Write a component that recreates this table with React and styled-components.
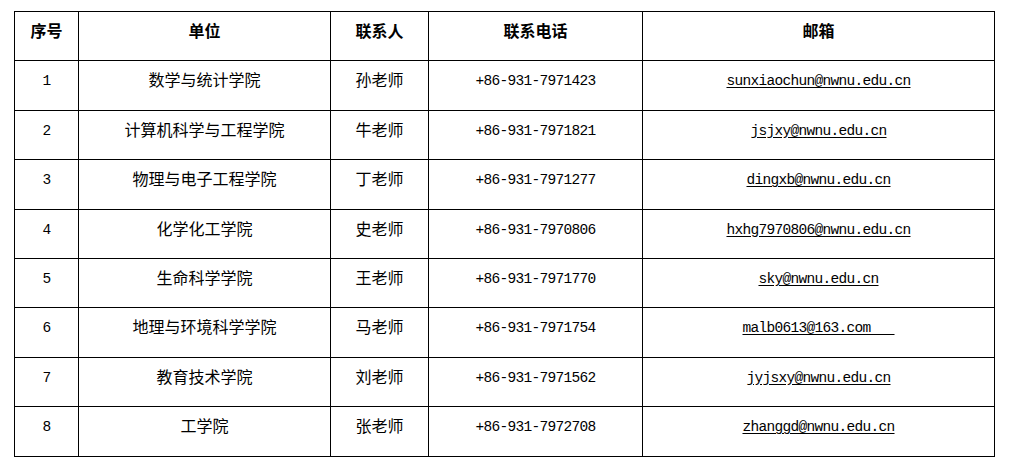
import React from 'react';
import styled, { createGlobalStyle } from 'styled-components';

const GlobalStyle = createGlobalStyle`
  html, body {
    margin: 0;
    background: #fff;
  }
  body {
    font-family: "Noto Sans CJK SC", "Liberation Sans", sans-serif;
    color: #000;
  }
`;

const contacts = [
  { id: 1, unit: '数学与统计学院', person: '孙老师', phone: '+86-931-7971423', email: 'sunxiaochun@nwnu.edu.cn' },
  { id: 2, unit: '计算机科学与工程学院', person: '牛老师', phone: '+86-931-7971821', email: 'jsjxy@nwnu.edu.cn' },
  { id: 3, unit: '物理与电子工程学院', person: '丁老师', phone: '+86-931-7971277', email: 'dingxb@nwnu.edu.cn' },
  { id: 4, unit: '化学化工学院', person: '史老师', phone: '+86-931-7970806', email: 'hxhg7970806@nwnu.edu.cn' },
  { id: 5, unit: '生命科学学院', person: '王老师', phone: '+86-931-7971770', email: 'sky@nwnu.edu.cn' },
  { id: 6, unit: '地理与环境科学学院', person: '马老师', phone: '+86-931-7971754', email: 'malb0613@163.com\u00a0\u00a0\u00a0' },
  { id: 7, unit: '教育技术学院', person: '刘老师', phone: '+86-931-7971562', email: 'jyjsxy@nwnu.edu.cn' },
  { id: 8, unit: '工学院', person: '张老师', phone: '+86-931-7972708', email: 'zhanggd@nwnu.edu.cn' },
];

const columns = [
  { key: 'id', title: '序号', width: 64 },
  { key: 'unit', title: '单位', width: 252 },
  { key: 'person', title: '联系人', width: 98 },
  { key: 'phone', title: '联系电话', width: 214 },
  { key: 'email', title: '邮箱', width: 352 },
];

const App = () => (
  <>
    <GlobalStyle />
    <Page>
      <Table>
        <colgroup>
          {columns.map(col => (
            <col key={col.key} style={{ width: col.width }} />
          ))}
        </colgroup>
        <thead>
          <Row>
            {columns.map(col => (
              <HeadCell key={col.key}>{col.title}</HeadCell>
            ))}
          </Row>
        </thead>
        <tbody>
          {contacts.map(item => (
            <Row key={item.id}>
              <Cell><Latin>{item.id}</Latin></Cell>
              <Cell>{item.unit}</Cell>
              <Cell>{item.person}</Cell>
              <Cell><Latin>{item.phone}</Latin></Cell>
              <Cell><Mail href={`mailto:${item.email.trim()}`}>{item.email}</Mail></Cell>
            </Row>
          ))}
        </tbody>
      </Table>
    </Page>
  </>
);

const Page = styled.div`
  padding: 11px 16px 14px 14px;
`;

const Table = styled.table`
  width: 981px;
  border-collapse: collapse;
  table-layout: fixed;
`;

const Row = styled.tr`
  height: 49.4px;
`;

const HeadCell = styled.th`
  border: 1px solid #000;
  padding: 8px 4px 0;
  vertical-align: top;
  text-align: center;
  font-size: 16px;
  line-height: 20px;
  font-weight: 700;
`;

const Cell = styled.td`
  border: 1px solid #000;
  padding: 8px 4px 0;
  vertical-align: top;
  text-align: center;
  font-size: 16px;
  line-height: 20px;
  font-weight: 400;
`;

const Latin = styled.span`
  font-family: "Liberation Mono", monospace;
  font-size: 14.5px;
  letter-spacing: -0.7px;
  vertical-align: 1px;
`;

const Mail = styled(Latin).attrs({ as: 'a' })`
  color: #000;
  text-decoration: underline;
  text-underline-offset: 2px;
  white-space: pre;
`;

export default App;
